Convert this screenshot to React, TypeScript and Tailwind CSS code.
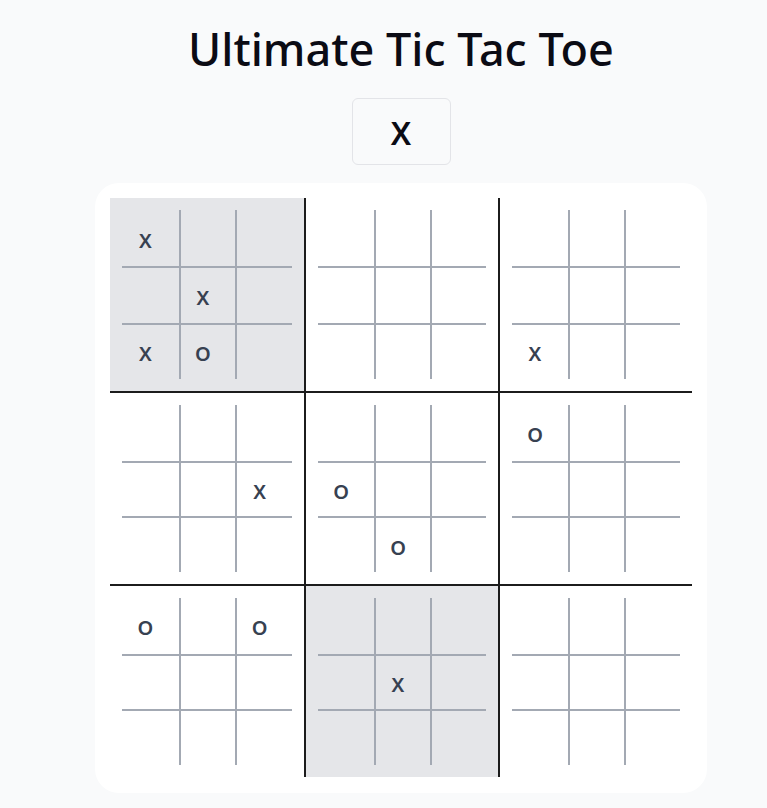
import React from "react";

type Mark = "X" | "O" | "";

const boards: Mark[][] = [
  ["X", "", "", "", "X", "", "X", "O", ""],
  ["", "", "", "", "", "", "", "", ""],
  ["", "", "", "", "", "", "X", "", ""],
  ["", "", "", "", "", "X", "", "", ""],
  ["", "", "", "O", "", "", "", "O", ""],
  ["O", "", "", "", "", "", "", "", ""],
  ["O", "", "O", "", "", "", "", "", ""],
  ["", "", "", "", "X", "", "", "", ""],
  ["", "", "", "", "", "", "", "", ""],
];

const highlighted = [0, 7];

function MiniBoard({ cells }: { cells: Mark[] }) {
  return (
    <div className="grid grid-cols-3 grid-rows-3 w-full h-full">
      {cells.map((c, i) => {
        const col = i % 3;
        const row = Math.floor(i / 3);
        return (
          <div
            key={i}
            className={
              "flex items-center justify-center pr-[10px] pt-[5px] text-[20px] font-semibold text-[#374151] border-[#a3a9b3] " +
              (col > 0 ? "border-l-2 " : "") +
              (row > 0 ? "border-t-2" : "")
            }
          >
            {c}
          </div>
        );
      })}
    </div>
  );
}

export default function App() {
  return (
    <div
      className="min-h-screen bg-[#f9fafb] pl-[35px] flex flex-col items-center"
      style={{ fontFamily: '"Noto Sans", "Open Sans", sans-serif' }}
    >
      <h1 className="mt-[24px] h-[48px] text-[45px] leading-[50px] font-medium text-[#0b0b14]">
        Ultimate Tic Tac Toe
      </h1>
      <div className="mt-[26px] w-[99px] h-[67px] rounded-md border border-[#e3e4e8] bg-[#f9fafb] flex items-center justify-center pt-[3px] text-[32px] font-semibold text-[#0b0b14]">
        X
      </div>
      <div className="mt-[18px] w-[612px] h-[610px] rounded-3xl bg-white p-[15px]">
        <div className="grid grid-cols-3 w-[582px]">
          {boards.map((b, i) => {
            const col = i % 3;
            const row = Math.floor(i / 3);
            return (
              <div
                key={i}
                className={
                  "h-[193px] p-3 border-[#1c1c1c] " +
                  (highlighted.includes(i) ? "bg-[#e5e6e9] " : "bg-white ") +
                  (col > 0 ? "border-l-2 " : "") +
                  (row > 0 ? "border-t-2" : "")
                }
              >
                <MiniBoard cells={b} />
              </div>
            );
          })}
        </div>
      </div>
    </div>
  );
}
